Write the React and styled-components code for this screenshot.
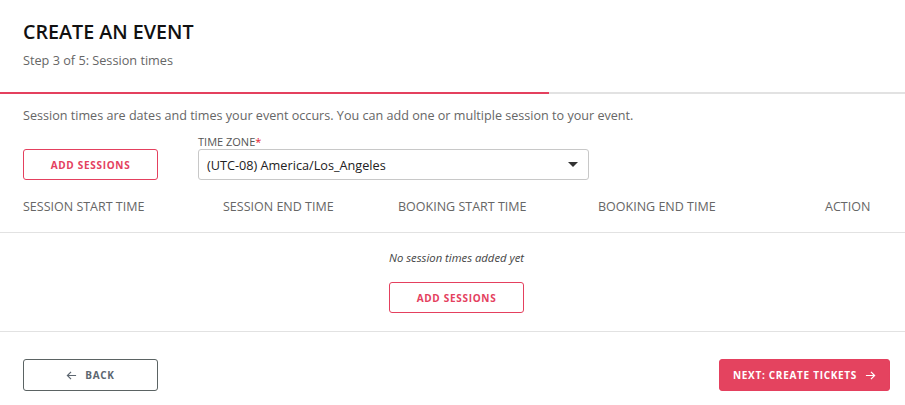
import React from 'react'
import styled, { createGlobalStyle } from 'styled-components'

const GlobalStyle = createGlobalStyle`
  body {
    margin: 0;
    background: #ffffff;
    font-family: "Open Sans", "Noto Sans", sans-serif;
    color: #333;
  }
`

const Page = styled.div`
  width: 905px;
  height: 405px;
  overflow: hidden;
`

const Header = styled.div`
  padding: 18px 23px 0;
`

const Title = styled.h1`
  margin: 0;
  font-size: 19.7px;
  line-height: 28px;
  font-weight: 600;
  color: #111;
`

const Subtitle = styled.div`
  margin-top: 5px;
  font-size: 12.7px;
  line-height: 18px;
  color: #666;
`

const Progress = styled.div`
  margin-top: 23px;
  height: 2px;
  background: #e2e2e2;
`

const ProgressFill = styled.div`
  height: 100%;
  background: #e4405e;
`

const Body = styled.div`
  padding: 0 15px 0 23px;
`

const Intro = styled.p`
  margin: 13px 0 0;
  font-size: 12.6px;
  line-height: 18px;
  color: #666;
`

const Controls = styled.div`
  display: flex;
  align-items: flex-end;
  gap: 40px;
  margin-top: 10px;
`

const Button = styled.button`
  display: inline-flex;
  align-items: center;
  justify-content: center;
  gap: 8px;
  height: ${p => p.$h || 31}px;
  width: ${p => p.$w || 135}px;
  padding: 0;
  border-radius: 3px;
  font-family: "Open Sans", sans-serif;
  font-size: 10px;
  font-weight: 700;
  letter-spacing: 0.7px;
  cursor: pointer;
  border: 1px solid ${p => (p.$variant === 'dark' ? '#5b6363' : '#e4405e')};
  background: ${p => (p.$variant === 'solid' ? '#e4435f' : '#fff')};
  color: ${p =>
    p.$variant === 'solid' ? '#fff' : p.$variant === 'dark' ? '#5c6670' : '#e4405e'};
`

const Field = styled.div`
  display: flex;
  flex-direction: column;
`

const Label = styled.label`
  font-size: 11px;
  line-height: 14px;
  color: #555;
`

const Star = styled.span`
  color: #e4202e;
`

const Select = styled.div`
  width: 391px;
  height: 31px;
  box-sizing: border-box;
  border: 1px solid #c8c8c8;
  border-radius: 3px;
  display: flex;
  align-items: center;
  justify-content: space-between;
  padding: 0 10px 0 8px;
  font-size: 12.7px;
  color: #222;
`

const Caret = styled.span`
  width: 0;
  height: 0;
  border-left: 5px solid transparent;
  border-right: 5px solid transparent;
  border-top: 5px solid #333;
`

const TableHead = styled.div`
  display: grid;
  grid-template-columns: 200px 175px 200px 227px auto;
  align-items: center;
  height: 52px;
  padding: 0 23px;
  font-size: 12.5px;
  color: #666;
  border-bottom: 1px solid #e2e2e2;
`

const Empty = styled.div`
  display: flex;
  flex-direction: column;
  align-items: center;
  padding: 17px 15px 18px 23px;
  border-bottom: 1px solid #e2e2e2;
`

const EmptyText = styled.div`
  font-size: 11.3px;
  font-style: italic;
  color: #444;
  line-height: 16px;
  margin-bottom: 16px;
`

const Footer = styled.div`
  display: flex;
  justify-content: space-between;
  padding: 27px 15px 0 23px;
`

const Arrow = ({ dir }) => (
  <svg width="11" height="11" viewBox="0 0 12 12" fill="none" stroke="currentColor" strokeWidth="1.3">
    {dir === 'left' ? (
      <path d="M11 6H1.5M5.5 2L1.5 6l4 4" />
    ) : (
      <path d="M1 6h9.5M6.5 2l4 4-4 4" />
    )}
  </svg>
)

export default function App() {
  return (
    <Page>
      <GlobalStyle />
      <Header>
        <Title>CREATE AN EVENT</Title>
        <Subtitle>Step 3 of 5: Session times</Subtitle>
      </Header>
      <Progress>
        <ProgressFill style={{ width: `${(3 / 5) * 100 + 0.7}%` }} />
      </Progress>
      <Body>
        <Intro>
          Session times are dates and times your event occurs. You can add one or multiple session to your event.
        </Intro>
        <Controls>
          <Button>ADD SESSIONS</Button>
          <Field>
            <Label>
              TIME ZONE<Star>*</Star>
            </Label>
            <Select>
              <span>(UTC-08) America/Los_Angeles</span>
              <Caret />
            </Select>
          </Field>
        </Controls>
      </Body>
      <TableHead>
        <span>SESSION START TIME</span>
        <span>SESSION END TIME</span>
        <span>BOOKING START TIME</span>
        <span>BOOKING END TIME</span>
        <span>ACTION</span>
      </TableHead>
      <Empty>
        <EmptyText>No session times added yet</EmptyText>
        <Button>ADD SESSIONS</Button>
      </Empty>
      <Footer>
        <Button $variant="dark" $h={32}>
          <Arrow dir="left" />
          BACK
        </Button>
        <Button $variant="solid" $w={171} $h={32}>
          NEXT: CREATE TICKETS
          <Arrow dir="right" />
        </Button>
      </Footer>
    </Page>
  )
}
